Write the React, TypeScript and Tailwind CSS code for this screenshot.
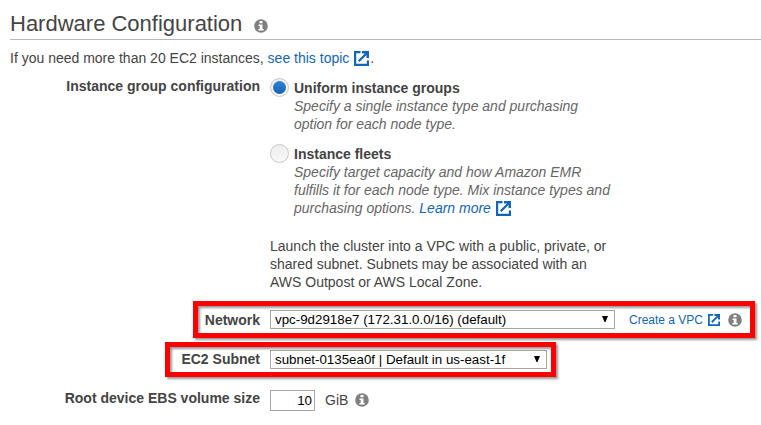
import type { ReactNode } from "react";

function InfoIcon({ size = 14 }: { size?: number }) {
  return (
    <svg width={size} height={size} viewBox="0 0 14 14" className="shrink-0">
      <circle cx="7" cy="7" r="6.8" fill="#808080" />
      <path d="M5.5 2h3v2.3h-3zM4.5 5.4h4v4.5h1.2v1.7H4.4V9.9h1.3V7.1H4.5z" fill="#fff" />
    </svg>
  );
}

function ExternalIcon({ size = 15, className = "" }: { size?: number; className?: string }) {
  return (
    <svg width={size} height={size} viewBox="0 0 15 15" fill="none" stroke="#1166bb" className={`inline-block shrink-0 ${className}`}>
      <path d="M6.5 1.1H1.1v12.8h12.8V9.5" strokeWidth="2.2" />
      <path d="M4.7 10.3 12 3" strokeWidth="2.3" />
      <path d="M8 0h7v7h-2.5V4.2L10.8 2.5H8z" fill="#1166bb" stroke="none" />
    </svg>
  );
}

function Radio({ checked = false }: { checked?: boolean }) {
  return (
    <span className="mt-px flex size-[19px] shrink-0 items-center justify-center rounded-full border border-[#c8c8c8] bg-linear-to-b from-[#eeeeee] to-[#f8f8f8]">
      {checked && <span className="size-[13px] rounded-full bg-linear-to-b from-[#2f83d8] to-[#1262b4]" />}
    </span>
  );
}

function Label({ children, className = "" }: { children: ReactNode; className?: string }) {
  return <div className={`w-[260px] shrink-0 text-right font-bold whitespace-nowrap ${className}`}>{children}</div>;
}

function Select({ children, className }: { children: ReactNode; className: string }) {
  return (
    <div className={`flex h-[19px] items-center justify-between border border-[#a6a6a6] bg-white pr-[5px] pl-1 text-[13.333px] text-black ${className}`}>
      <span className="pt-px whitespace-nowrap">{children}</span>
      <svg width="8" height="7" viewBox="0 0 8 7"><path d="M1 0h6L4.5 6h-1z" fill="#000" /></svg>
    </div>
  );
}

function Highlight({ className }: { className: string }) {
  return <div className={`pointer-events-none absolute border-5 border-[#ff0000] drop-shadow-[2px_2px_1px_rgba(0,0,0,0.4)] ${className}`} />;
}

export default function App() {
  return (
    <main className="h-[425px] w-[761px] overflow-hidden bg-white font-['Liberation_Sans',Arial,sans-serif] text-[14px] leading-[18px] text-[#444444]">
      <header className="ml-[10px] flex h-10 items-center border-b border-[#b8b8b8] pt-[9px]">
        <h1 className="text-[22px] leading-6">Hardware Configuration</h1>
        <span className="ml-3 pt-[3px]"><InfoIcon /></span>
      </header>
      <p className="mt-[9px] ml-[10px] flex h-[18px] whitespace-nowrap">
        <span>If you need more than 20 EC2 instances,&nbsp;</span>
        <a className="text-[#1166bb]">see this topic</a>
        <ExternalIcon className="mt-[2px] ml-[5px]" />
        <span className="ml-px">.</span>
      </p>
      <section className="mt-[10px] flex">
        <Label>Instance group configuration</Label>
        <div className="ml-[10px]">
          <div className="flex gap-[5px] whitespace-nowrap">
            <Radio checked />
            <div className="pt-[2px]">
              <strong className="block">Uniform instance groups</strong>
              <p className="text-[#666666] italic">Specify a single instance type and purchasing<br />option for each node type.</p>
            </div>
          </div>
          <div className="mt-[10px] flex gap-[5px] whitespace-nowrap">
            <Radio />
            <div className="pt-[2px]">
              <strong className="block">Instance fleets</strong>
              <p className="text-[#666666] italic">
                Specify target capacity and how Amazon EMR<br />fulfills it for each node type. Mix instance types and<br />
                <span className="flex">purchasing options.&nbsp;<a className="text-[#1166bb]">Learn more</a><ExternalIcon className="mt-[2px] ml-[5px]" /></span>
              </p>
            </div>
          </div>
          <p className="mt-[20px] whitespace-nowrap">Launch the cluster into a VPC with a public, private, or<br />shared subnet. Subnets may be associated with an<br />AWS Outpost or AWS Local Zone.</p>
        </div>
      </section>
      <section className="relative mt-[10px] flex h-[37px] items-center">
        <Label>Network</Label>
        <Select className="ml-[10px] w-[345px]">vpc-9d2918e7 (172.31.0.0/16) (default)</Select>
        <a className="ml-[14px] pt-px text-[12px] whitespace-nowrap text-[#1166bb]">Create a VPC</a>
        <ExternalIcon size={12} className="mt-px ml-[5px]" />
        <span className="ml-2"><InfoIcon /></span>
        <Highlight className="top-0 left-[193px] h-[37px] w-[562px]" />
      </section>
      <section className="relative mt-1 flex h-[35px] items-center">
        <Label className="pb-[2px]">EC2 Subnet</Label>
        <Select className="ml-[10px] w-[277px]">subnet-0135ea0f | Default in us-east-1f</Select>
        <Highlight className="top-0 left-[165px] h-[35px] w-[391px]" />
      </section>
      <section className="mt-[13px] flex h-[21px] items-center">
        <Label className="pb-[5px]">Root device EBS volume size</Label>
        <div className="ml-[10px] flex h-[21px] w-[45px] items-center justify-end border border-[#a6a6a6] pr-[2px] text-[13.333px] text-black">10</div>
        <span className="mr-[7px] ml-[10px] pb-[2px]">GiB</span>
        <span className="pb-px"><InfoIcon /></span>
      </section>
    </main>
  );
}
